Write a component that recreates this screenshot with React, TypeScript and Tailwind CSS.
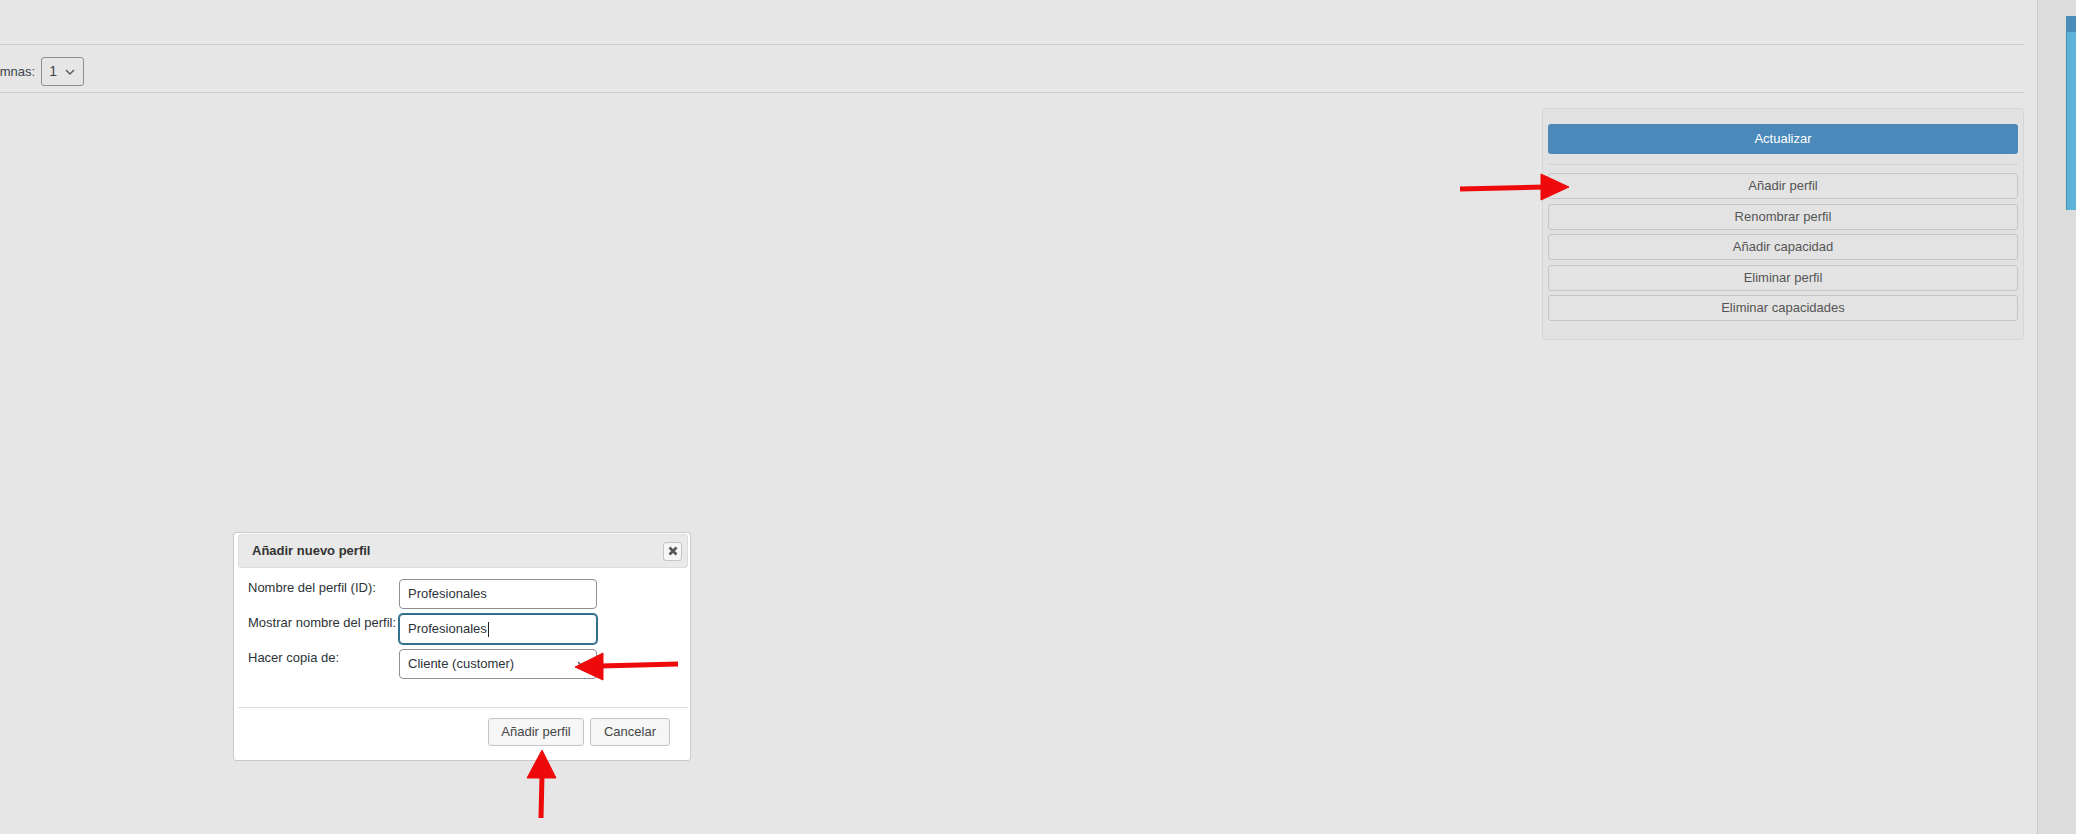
import React from "react";

const panelButtons = [
  "Añadir perfil",
  "Renombrar perfil",
  "Añadir capacidad",
  "Eliminar perfil",
  "Eliminar capacidades",
];

const ProfileDialog = () => {
  return (
    <div className="absolute left-[233px] top-[532px] w-[458px] bg-white border border-[#c9c9c9] rounded-[3px] pt-[1px] pl-[4px] pr-[2px]">
      <div className="h-[34px] border border-[#dddddd] bg-[#e9e9e9] rounded-[3px] flex items-center justify-between pl-[13px] pr-[5px]">
        <span className="font-bold text-[13px] text-[#333333]">Añadir nuevo perfil</span>
        <div className="w-[19px] h-[19px] border border-[#c5c5c5] bg-[#f6f6f6] rounded-[3px] flex items-center justify-center">
          <svg width="10" height="10" viewBox="0 0 10 10">
            <path d="M1.5 1.5 L8.5 8.5 M8.5 1.5 L1.5 8.5" stroke="#555555" strokeWidth="2.6" />
          </svg>
        </div>
      </div>

      <div className="flex flex-col gap-[5px] pl-[10px] pt-[11px] pb-[28px] text-[13px] text-[#2c3338]">
        <div className="flex items-start">
          <span className="w-[151px] leading-[18px]">Nombre del perfil (ID):</span>
          <div className="w-[198px] h-[30px] border border-[#8c8f94] rounded-[4px] bg-white px-[8px] flex items-center">
            Profesionales
          </div>
        </div>
        <div className="flex items-start">
          <span className="w-[151px] leading-[18px]">Mostrar nombre del perfil:</span>
          <div className="w-[198px] h-[30px] border border-[#33708f] shadow-[0_0_0_1px_#33708f] rounded-[4px] bg-white px-[8px] flex items-center">
            Profesionales
            <span className="inline-block w-px h-[15px] bg-[#222222] ml-px" />
          </div>
        </div>
        <div className="flex items-start">
          <span className="w-[151px] leading-[18px]">Hacer copia de:</span>
          <div className="w-[198px] h-[30px] border border-[#8c8f94] rounded-[4px] bg-white pl-[8px] pr-[10px] flex items-center justify-between">
            <span>Cliente (customer)</span>
            <svg width="9" height="6" viewBox="0 0 9 6">
              <path d="M1 1 L4.5 4.5 L8 1" stroke="#50575e" strokeWidth="1.4" fill="none" />
            </svg>
          </div>
        </div>
      </div>

      <div className="border-t border-[#dddddd] pt-[10px] pb-[14px] pr-[18px] flex justify-end gap-[6px]">
        <div className="w-[96px] h-[28px] border border-[#c5c5c5] bg-[#f6f6f6] rounded-[3px] flex items-center justify-center text-[13px] text-[#454545]">
          Añadir perfil
        </div>
        <div className="w-[80px] h-[28px] border border-[#c5c5c5] bg-[#f6f6f6] rounded-[3px] flex items-center justify-center text-[13px] text-[#454545]">
          Cancelar
        </div>
      </div>
    </div>
  );
};

const Arrows = () => {
  return (
    <svg className="absolute left-0 top-0 pointer-events-none" width="2076" height="834" viewBox="0 0 2076 834">
      <g fill="#ee0a0a" stroke="#ee0a0a">
        <line x1="1460" y1="189" x2="1545" y2="187" strokeWidth="5" />
        <polygon points="1541,174 1569,187 1541,200" strokeWidth="1" />
        <line x1="678" y1="664" x2="600" y2="666" strokeWidth="5" />
        <polygon points="603,653 575,667 603,680" strokeWidth="1" />
        <line x1="541" y1="818" x2="542" y2="775" strokeWidth="5" />
        <polygon points="527,778 542,750 556,778" strokeWidth="1" />
      </g>
    </svg>
  );
};

const App = () => {
  return (
    <div className="relative w-[2076px] h-[834px] overflow-hidden bg-[#e6e6e6] flex font-['Liberation_Sans',Arial,sans-serif]">
      <div className="w-[2037px] flex flex-col">
        <div className="w-[2024px] flex flex-col">
          <div className="h-[45px] border-b border-[#cdcdcd]" />
          <div className="h-[48px] border-b border-[#cdcdcd] pt-[12px] flex items-start gap-[6px] ml-[-27px]">
            <span className="text-[13px] leading-[29px] text-[#3c434a]">Columnas:</span>
            <div className="w-[43px] h-[29px] border border-[#8c8f94] rounded-[3px] flex items-center justify-between pl-[7px] pr-[8px]">
              <span className="text-[14px] text-[#3c434a]">1</span>
              <svg width="10" height="6" viewBox="0 0 10 6">
                <path d="M1 1 L5 5 L9 1" stroke="#50575e" strokeWidth="1.4" fill="none" />
              </svg>
            </div>
          </div>

          {/* side panel with profile actions */}
          <div className="self-end mt-[15px] w-[482px] border border-[#d6d6d6] rounded-[4px] bg-[#e2e2e2] pt-[15px] pl-[5px] pr-[5px] pb-[18px] flex flex-col">
            <div className="h-[30px] rounded-[3px] bg-[#4a89b9] flex items-center justify-center text-[13px] text-white">
              Actualizar
            </div>
            <div className="mt-[10px] h-px bg-[#d3d3d3]" />
            <div className="mt-[8px] flex flex-col gap-[4.5px]">
              {panelButtons.map((label) => (
                <div
                  key={label}
                  className="h-[26px] border border-[#c6c6c6] rounded-[3px] bg-[#e3e3e3] flex items-center justify-center text-[13px] text-[#555555]"
                >
                  {label}
                </div>
              ))}
            </div>
          </div>
        </div>
      </div>

      <div className="w-[39px] border-l border-[#c8c8c8] bg-[#dcdcdc]">
        <div className="ml-[28px] mt-[16px] w-[10px] h-[194px] border-l border-[#3f93ad] bg-[#5cb2d9] flex flex-col">
          <div className="h-[16px] bg-[#4b8cba]" />
        </div>
      </div>

      <ProfileDialog />
      <Arrows />
    </div>
  );
};

export default App;
